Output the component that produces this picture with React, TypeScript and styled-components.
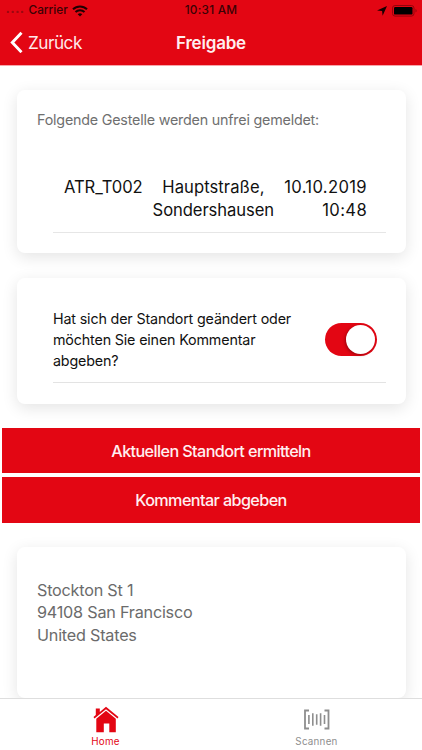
import React from "react";
import styled, { createGlobalStyle } from "styled-components";

const RED = "#e30613";

const GlobalStyle = createGlobalStyle`
  * { box-sizing: border-box; }
  body { margin: 0; background: #fff; }
  button { border: 0; padding: 0; margin: 0; font: inherit; background: none; color: inherit; }
`;

const Screen = styled.div`
  width: 422px;
  height: 750px;
  display: flex;
  flex-direction: column;
  overflow: hidden;
  background: #fff;
  color: #111;
  font-family: Inter, "Liberation Sans", sans-serif;
`;

const Header = styled.header`
  flex: none;
  height: 65px;
  background: ${RED};
  box-shadow: 0 1px 0 #f7a5aa;
  position: relative;
`;

const StatusBar = styled.div`
  height: 21px;
  display: grid;
  grid-template-columns: 1fr auto 1fr;
  align-items: center;
  padding: 0 4px 0 6px;
  color: #3a0205;
  font-size: 11.8px;
  line-height: 21px;
  font-weight: 500;
`;

const StatusGroup = styled.div<{ $end?: boolean }>`
  display: flex;
  align-items: center;
  justify-content: ${(p) => (p.$end ? "flex-end" : "flex-start")};
  gap: ${(p) => (p.$end ? 5 : 4.5)}px;
`;

const Clock = styled.span`
  letter-spacing: 0.25px;
  margin-right: 2px;
`;

const NavBar = styled.div`
  height: 44px;
  display: grid;
  grid-template-columns: 1fr auto 1fr;
  align-items: center;
  padding: 0 10px;
  color: #fff;
`;

const BackButton = styled.button`
  display: flex;
  align-items: center;
  gap: 5px;
  height: 42px;
  align-self: start;
  font-size: 17.2px;
  letter-spacing: -0.5px;
  color: #ffe9ea;
`;

const Title = styled.h1`
  margin: 0;
  font-size: 17px;
  font-weight: 600;
  letter-spacing: -0.2px;
  color: #ffeeef;
`;

const Content = styled.main`
  flex: 1;
  min-height: 0;
  overflow: hidden;
  display: flex;
  flex-direction: column;
  padding-top: 25px;
`;

const Card = styled.section<{ $height: number }>`
  flex: none;
  height: ${(p) => p.$height}px;
  margin: 0 16.5px;
  border-radius: 8px;
  background: #fff;
  box-shadow: 0 4px 16px rgba(0, 0, 0, 0.11);

  & + & {
    margin-top: 24.5px;
  }
`;

const Intro = styled.p`
  margin: 0;
  padding: 20px 20.5px 0;
  font-size: 14.3px;
  line-height: 20px;
  letter-spacing: -0.2px;
  color: #6f6f6f;
`;

const RackRow = styled.div`
  display: grid;
  grid-template-columns: 78px 132px 93px;
  margin: 46px 20px 0 36.5px;
  padding: 0 18.5px 9px 11px;
  border-bottom: 1px solid #e6e6e6;
  font-size: 16.6px;
  line-height: 23.3px;
`;

const RackCell = styled.div`
  text-align: right;
  white-space: nowrap;
  letter-spacing: -0.08px;
`;

const RackStreet = styled.div`
  padding-right: 9.5px;
  letter-spacing: 0.08px;
`;

const RackTime = styled(RackCell)`
  letter-spacing: 0.35px;
`;

const Question = styled.div`
  display: flex;
  align-items: center;
  justify-content: space-between;
  margin: 0 20px 0 36.5px;
  padding: 30px 8.5px 10px 0;
  border-bottom: 1px solid #e3e3e3;
  font-size: 14.3px;
  line-height: 21.4px;
  letter-spacing: -0.16px;
`;

const Switch = styled.button`
  flex: none;
  width: 52px;
  height: 33px;
  padding: 2px;
  border-radius: 17px;
  background: ${RED};
  display: flex;
  justify-content: flex-end;
`;

const Knob = styled.span`
  width: 29px;
  height: 29px;
  border-radius: 50%;
  background: #fff;
  box-shadow: -1px 1px 3px rgba(70, 0, 0, 0.45);
`;

const Actions = styled.div`
  flex: none;
  display: flex;
  flex-direction: column;
  gap: 3.8px;
  margin: 24.5px 2px;
  position: relative;
`;

const ActionButton = styled.button`
  height: 45.4px;
  background: ${RED};
  color: #ffeff0;
  font-size: 16.2px;
  font-weight: 500;
  letter-spacing: -0.6px;
`;

const Address = styled.address`
  padding: 32px 20.5px;
  font-style: normal;
  font-size: 16.2px;
  line-height: 22.4px;
  letter-spacing: -0.22px;
  color: #6b6b6b;
`;

const TabBar = styled.nav`
  flex: none;
  position: relative;
  height: 52px;
  display: grid;
  grid-template-columns: 1fr 1fr;
  background: #fff;
  border-top: 1px solid #dedede;
`;

const Tab = styled.button<{ $active?: boolean }>`
  display: flex;
  flex-direction: column;
  align-items: center;
  padding-top: 7px;
  color: ${(p) => (p.$active ? RED : "#8e8e8e")};
  font-size: 9.8px;
  line-height: 13px;
  letter-spacing: 0.25px;
`;

const TabIcon = styled.svg`
  width: 28px;
  height: 28px;
  margin-bottom: 1px;
`;

const SignalDots = () => (
  <svg width="18" height="4" viewBox="0 0 18 4" fill="#9c0710">
    {[2, 6.8, 11.6, 16.2].map((x) => <circle key={x} cx={x} cy="3" r="1.2" />)}
  </svg>
);

const WifiIcon = () => (
  <svg width="16" height="12" viewBox="0 0 16 12" fill="none" stroke="#200002" strokeWidth="2">
    <path d="M1 4.3a10 10 0 0 1 14 0M3.5 7a6.4 6.4 0 0 1 9 0" />
    <path d="M5.7 9.3a3.3 3.3 0 0 1 4.6 0L8 11.5z" fill="#200002" stroke="none" />
  </svg>
);

const LocationIcon = () => (
  <svg width="10" height="10" viewBox="0 0 10 10">
    <path d="M10 0 5.6 9.7 5.1 5 0 4.5z" fill="#160001" />
  </svg>
);

const BatteryIcon = () => (
  <svg width="26" height="12" viewBox="0 0 26 12">
    <rect x="0.5" y="0.5" width="21.5" height="10.6" rx="2.6" fill="none" stroke="#93040c" />
    <rect x="2" y="2" width="18.5" height="7.6" rx="1.2" fill="#000" />
    <path d="M23.5 4v3.6c1.5-.7 1.5-2.9 0-3.6z" fill="#93040c" />
  </svg>
);

const BackIcon = () => (
  <svg width="13" height="22" viewBox="0 0 13 22" fill="none" stroke="#fff" strokeWidth="2.9">
    <path d="M11.5 1.8 2.3 11.5l9.2 9.7" />
  </svg>
);

const HomeIcon = () => (
  <TabIcon viewBox="0 0 28 28" fill="currentColor">
    <path d="M3.8 2.5h4v3.4L14 .8 26.5 11l-1 1.4L14 3.2 2.5 12.4 1.5 11l2.3-2z" />
    <path d="M14 4.8 23.8 12.8v13.4H17.3v-8.7h-5.5v8.7H4.3V12.8z" />
  </TabIcon>
);

const BarcodeIcon = () => (
  <TabIcon viewBox="0 0 28 28" fill="none" stroke="currentColor" strokeWidth="1.8">
    <path d="M6 4.5H2v18h4M21.5 4.5h4v18h-4" />
    <path d="M5.9 9v9M9.8 7.3v12.4M13.7 8.2v10.6M17.6 7.3v12.4M21.5 9v9" strokeWidth="1.6" />
  </TabIcon>
);

export default function App() {
  return (
    <>
      <GlobalStyle />
      <Screen>
        <Header>
          <StatusBar>
            <StatusGroup>
              <SignalDots />
              <span>Carrier</span>
              <WifiIcon />
            </StatusGroup>
            <Clock>10:31 AM</Clock>
            <StatusGroup $end>
              <LocationIcon />
              <BatteryIcon />
            </StatusGroup>
          </StatusBar>
          <NavBar>
            <BackButton><BackIcon />Zurück</BackButton>
            <Title>Freigabe</Title>
          </NavBar>
        </Header>
        <Content>
          <Card $height={163}>
            <Intro>Folgende Gestelle werden unfrei gemeldet:</Intro>
            <RackRow>
              <RackCell>ATR_T002</RackCell>
              <RackCell>
                <RackStreet>Hauptstraße,</RackStreet>
                Sondershausen
              </RackCell>
              <RackTime>10.10.2019<br />10:48</RackTime>
            </RackRow>
          </Card>
          <Card $height={126}>
            <Question>
              <span>Hat sich der Standort geändert oder<br />möchten Sie einen Kommentar<br />abgeben?</span>
              <Switch role="switch" aria-checked="true"><Knob /></Switch>
            </Question>
          </Card>
          <Actions>
            <ActionButton>Aktuellen Standort ermitteln</ActionButton>
            <ActionButton>Kommentar abgeben</ActionButton>
          </Actions>
          <Card $height={151}>
            <Address>Stockton St 1<br />94108 San Francisco<br />United States</Address>
          </Card>
        </Content>
        <TabBar>
          <Tab $active><HomeIcon />Home</Tab>
          <Tab><BarcodeIcon />Scannen</Tab>
        </TabBar>
      </Screen>
    </>
  );
}
